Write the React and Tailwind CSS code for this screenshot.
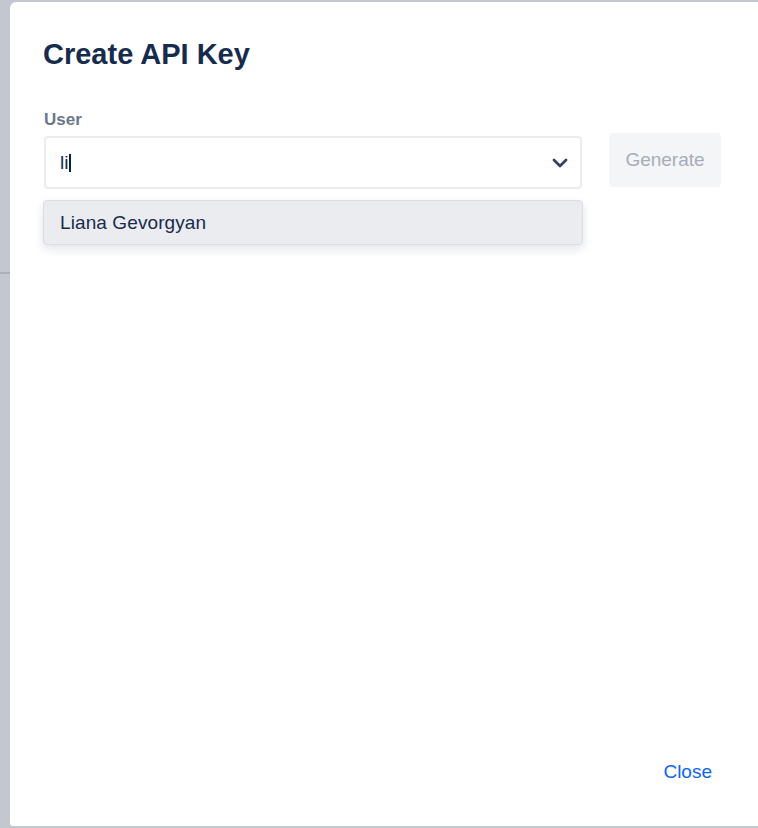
import { useState } from 'react'

const font = { fontFamily: '"Liberation Sans", Arial, sans-serif' }

function Chevron() {
  return (
    <svg width="16" height="10" viewBox="0 0 16 10" fill="none">
      <path d="M2 2 L8 8 L14 2" stroke="#344563" strokeWidth="2.8" strokeLinecap="round" strokeLinejoin="round" />
    </svg>
  )
}

export default function App() {
  const [query] = useState('li')

  return (
    <div className="w-[758px] h-[828px] bg-[#c3c7d0] flex pt-[2px] pl-[10px] pb-[2px] relative overflow-hidden" style={font}>
      {/* page divider peeking out on the left */}
      <div className="absolute left-0 top-[272px] w-[10px] h-[2px] bg-[#aab0bb]" />

      <div className="flex-1 bg-white rounded-tl-[6px] rounded-bl-[3px] flex flex-col pt-[34px] pl-[33px]">
        <h1 className="text-[29px] leading-[36px] font-semibold text-[#172b4d]">Create API Key</h1>

        <label className="mt-[38px] text-[17px] leading-[20px] font-semibold text-[#6b778c] pl-[1px]">User</label>

        <div className="flex items-start mt-[6px]">
          <div className="relative w-[539px] pl-[1px]">
            <div className="h-[53px] border-2 border-[#ebecf0] rounded-[4px] flex items-center pl-[14px] pr-[12px]">
              <span className="text-[19px] text-[#172b4d] leading-[24px]">{query}</span>
              <span className="w-[2px] h-[18px] bg-[#091e42] ml-[1px]" />
              <span className="ml-auto flex items-center pt-[1px]">
                <Chevron />
              </span>
            </div>

            {/* suggestion menu */}
            <div className="absolute left-0 right-[-1px] top-[64px] h-[45px] bg-[#ebecf0] border border-[#dcdee3] rounded-[4px] shadow-[0_4px_10px_rgba(9,30,66,0.12)] flex items-center pl-[16px]">
              <span className="text-[19px] text-[#172b4d] leading-[24px] tracking-[0.1px]">Liana Gevorgyan</span>
            </div>
          </div>

          <button className="ml-[27px] -mt-[3px] w-[112px] h-[54px] rounded-[4px] bg-[#f4f5f7] text-[19px] text-[#a5adba]">
            Generate
          </button>
        </div>

        <div className="mt-auto flex justify-end pr-[46px] pb-[42px]">
          <button className="text-[19px] leading-[24px] text-[#0b66f0]">Close</button>
        </div>
      </div>
    </div>
  )
}
